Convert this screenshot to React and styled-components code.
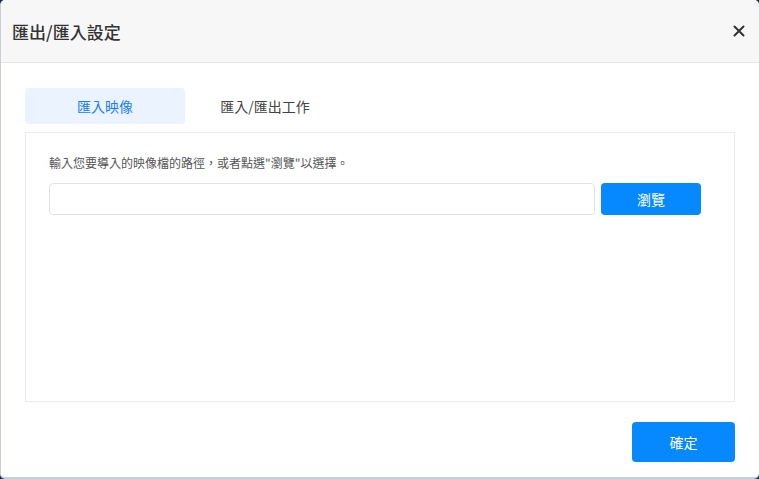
import React, { useState } from 'react';
import styled, { createGlobalStyle } from 'styled-components';

const GlobalStyle = createGlobalStyle`
  html, body {
    margin: 0;
    padding: 0;
    background: #1c2844;
    font-family: "Noto Sans CJK TC", "Noto Sans", sans-serif;
  }
  * { box-sizing: border-box; }
`;

const Dialog = styled.div`
  width: 759px;
  height: 479px;
  background: #fff;
  border-radius: 5px;
  border-left: 1px solid #c9ced8;
  border-bottom: 2px solid #c9ced8;
  display: flex;
  flex-direction: column;
  overflow: hidden;
`;

const Header = styled.div`
  height: 63px;
  flex: none;
  background: #f7f7f7;
  border-bottom: 1px solid #e4e4e4;
  display: flex;
  align-items: center;
  justify-content: space-between;
  padding: 0 12px 0 11px;
`;

const Title = styled.h1`
  margin: 0;
  font-size: 17px;
  font-weight: 500;
  color: #333;
`;

const CloseButton = styled.button`
  border: none;
  background: none;
  padding: 0;
  width: 16px;
  height: 16px;
  display: flex;
  align-items: center;
  justify-content: center;
  cursor: pointer;
`;

const Body = styled.div`
  flex: 1;
  padding: 25px 24px 0 24px;
  display: flex;
  flex-direction: column;
`;

const Tabs = styled.div`
  display: flex;
  height: 36px;
`;

const Tab = styled.button`
  width: 160px;
  height: 36px;
  border: none;
  border-radius: 4px;
  font-family: inherit;
  font-size: 14px;
  cursor: pointer;
  background: ${({ active }) => (active ? '#eaf3ff' : 'transparent')};
  color: ${({ active }) => (active ? '#1a80f2' : '#444')};
`;

const Panel = styled.div`
  margin-top: 8px;
  height: 270px;
  border: 1px solid #ececec;
  padding: 20px 33px 0 23px;
`;

const Hint = styled.p`
  margin: 0;
  font-size: 12px;
  line-height: 20px;
  color: #555;
`;

const Row = styled.div`
  display: flex;
  gap: 6px;
  margin-top: 10px;
`;

const PathInput = styled.input`
  flex: 1;
  height: 32px;
  border: 1px solid #e2e2e2;
  border-radius: 4px;
  outline: none;
  padding: 0 8px;
  font-family: inherit;
`;

const BlueButton = styled.button`
  width: ${({ w }) => w}px;
  height: ${({ h }) => h}px;
  border: none;
  border-radius: 4px;
  background: #0688ff;
  color: #fff;
  font-family: inherit;
  font-size: 14px;
  cursor: pointer;
`;

const Footer = styled.div`
  display: flex;
  justify-content: flex-end;
  padding-top: 20px;
`;

export default function App() {
  const [tab, setTab] = useState(0);
  return (
    <>
      <GlobalStyle />
      <Dialog>
        <Header>
          <Title>匯出/匯入設定</Title>
          <CloseButton aria-label="close">
            <svg width="12" height="12" viewBox="0 0 12 12">
              <path d="M1.5 1.5 L10.5 10.5 M10.5 1.5 L1.5 10.5" stroke="#333" strokeWidth="2" strokeLinecap="round" />
            </svg>
          </CloseButton>
        </Header>
        <Body>
          <Tabs>
            <Tab active={tab === 0} onClick={() => setTab(0)}>匯入映像</Tab>
            <Tab active={tab === 1} onClick={() => setTab(1)}>匯入/匯出工作</Tab>
          </Tabs>
          <Panel>
            <Hint>輸入您要導入的映像檔的路徑，或者點選"瀏覽"以選擇。</Hint>
            <Row>
              <PathInput />
              <BlueButton w={100} h={32}>瀏覽</BlueButton>
            </Row>
          </Panel>
          <Footer>
            <BlueButton w={103} h={40}>確定</BlueButton>
          </Footer>
        </Body>
      </Dialog>
    </>
  );
}
